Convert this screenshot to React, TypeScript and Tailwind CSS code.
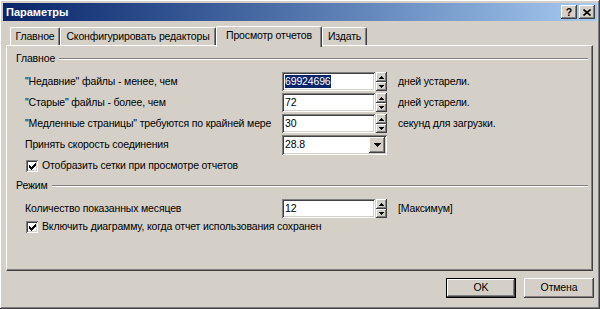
const raised =
  "shadow-[inset_-1px_-1px_#404040,inset_1px_1px_#ffffff,inset_-2px_-2px_#808080,inset_2px_2px_#d4d0c8]";
const sunken =
  "shadow-[inset_1px_1px_#808080,inset_-1px_-1px_#ffffff,inset_2px_2px_#404040,inset_-2px_-2px_#d4d0c8]";

function Arrow({ up }: { up?: boolean }) {
  return (
    <svg width="5" height="3" viewBox="0 0 5 3" shapeRendering="crispEdges">
      {up ? (
        <path d="M2 0h1v1h1v1h1v1H0V2h1V1h1z" fill="#000" />
      ) : (
        <path d="M0 0h5v1H4v1H3v1H2V2H1V1H0z" fill="#000" />
      )}
    </svg>
  );
}

function Spin() {
  return (
    <div className="flex flex-col w-[11px] h-[19px] ml-px">
      <div className={`h-[10px] bg-[#d4d0c8] flex items-center justify-center ${raised}`}>
        <Arrow up />
      </div>
      <div className={`h-[9px] bg-[#d4d0c8] flex items-center justify-center ${raised}`}>
        <Arrow />
      </div>
    </div>
  );
}

function Field({ value, selected }: { value: string; selected?: boolean }) {
  return (
    <div className={`w-[93px] h-[19px] bg-white flex items-center pl-[3px] ${sunken}`}>
      <span className={selected ? "bg-[#0a246a] text-white leading-[13px]" : "leading-[13px]"}>{value}</span>
    </div>
  );
}

function Check({ label }: { label: string }) {
  return (
    <div className="flex items-center h-[14px] pl-[19px] gap-[4px]">
      <div className={`shrink-0 w-[12px] h-[12px] bg-white flex items-center justify-center ${sunken}`}>
        <svg width="7" height="7" viewBox="0 0 7 7" shapeRendering="crispEdges">
          <path d="M6 0h1v3H6v1H5v1H4v1H3v1H2V6H1V5H0V2h1v1h1v1h1V3h1V2h1V1h1z" fill="#000" />
        </svg>
      </div>
      <span className="whitespace-nowrap">{label}</span>
    </div>
  );
}

function Group({ title }: { title: string }) {
  return (
    <div className="flex items-center h-[14px] pl-[9px] pr-[4px] gap-[4px]">
      <span>{title}</span>
      <div className="flex-1 h-[2px] border-t border-t-[#808080] border-b border-b-white" />
    </div>
  );
}

function Row({ label, children }: { label: string; children: React.ReactNode }) {
  return (
    <div className="flex items-center h-[19px] pl-[18px]">
      <span className="w-[257px] whitespace-nowrap">{label}</span>
      {children}
    </div>
  );
}

function Tab({ label, w, active }: { label: string; w: string; active?: boolean }) {
  return (
    <div
      className={`${w} ${
        active ? "h-[21px] -mb-[2px] relative z-10" : "h-[18px]"
      } bg-[#d4d0c8] border-t border-l border-r border-white border-r-[#404040] rounded-t-[2px] shadow-[inset_-1px_0_#808080] flex items-center justify-center whitespace-nowrap`}
    >
      <span className={active ? "-mt-[3px]" : ""}>{label}</span>
    </div>
  );
}

function Button({ label, def }: { label: string; def?: boolean }) {
  return (
    <div className={`w-[70px] h-[20px] ${def ? "border border-black" : ""}`}>
      <div className={`w-full h-full bg-[#d4d0c8] flex items-center justify-center ${raised}`}>{label}</div>
    </div>
  );
}

export default function App() {
  return (
    <div
      className={`w-[600px] h-[309px] bg-[#d4d0c8] p-[3px] flex flex-col text-[10.5px] tracking-[-0.15px] text-black font-['Liberation_Sans',Arial,sans-serif] ${raised}`}
    >
      <div className="h-[18px] bg-linear-to-r from-[#0a246a] to-[#a6caf0] flex items-center justify-between pl-[3px] pr-[2px]">
        <span className="text-white font-bold text-[11px] tracking-normal">Параметры</span>
        <div className="flex gap-[2px]">
          <div className={`w-[16px] h-[14px] bg-[#d4d0c8] flex items-center justify-center font-bold leading-none ${raised}`}>?</div>
          <div className={`w-[16px] h-[14px] bg-[#d4d0c8] flex items-center justify-center ${raised}`}>
            <svg width="8" height="7" viewBox="0 0 8 7">
              <path d="M0.5 0.5L7.5 6.5M7.5 0.5L0.5 6.5" stroke="#000" strokeWidth="1.6" />
            </svg>
          </div>
        </div>
      </div>

      <div className="mt-[5px] ml-[3px] w-[587px] flex flex-col">
        <div className="h-[19px] flex items-end pl-[4px]">
          <Tab label="Главное" w="w-[50px]" />
          <Tab label="Сконфигурировать редакторы" w="w-[156px]" />
          <Tab label="Просмотр отчетов" w="w-[106px]" active />
          <Tab label="Издать" w="w-[45px]" />
        </div>
        <div className="h-[226px] flex flex-col border-t border-l border-white border-r border-b border-r-[#404040] border-b-[#404040] shadow-[inset_-1px_-1px_#808080] pt-[6px]">
          <Group title="Главное" />
          <div className="mt-[6px] flex flex-col gap-[2px]">
            <Row label={'"Недавние" файлы - менее, чем'}>
              <Field value="69924696" selected />
              <Spin />
              <span className="ml-[11px]">дней устарели.</span>
            </Row>
            <Row label={'"Старые" файлы - более, чем'}>
              <Field value="72" />
              <Spin />
              <span className="ml-[11px]">дней устарели.</span>
            </Row>
            <Row label={'"Медленные страницы" требуются по крайней мере'}>
              <Field value="30" />
              <Spin />
              <span className="ml-[11px]">секунд для загрузки.</span>
            </Row>
            <div className="flex items-center h-[20px] pl-[18px]">
              <span className="w-[257px]">Принять скорость соединения</span>
              <div className={`w-[105px] h-[20px] bg-white flex items-center pl-[3px] pr-[2px] ${sunken}`}>
                <span className="flex-1">28.8</span>
                <div className={`w-[16px] h-[16px] bg-[#d4d0c8] flex items-center justify-center ${raised}`}>
                  <svg width="7" height="4" viewBox="0 0 7 4" shapeRendering="crispEdges">
                    <path d="M0 0h7v1H6v1H5v1H4v1H3V3H2V2H1V1H0z" fill="#000" />
                  </svg>
                </div>
              </div>
            </div>
            <div className="mt-[2px]">
              <Check label="Отобразить сетки при просмотре отчетов" />
            </div>
          </div>
          <div className="mt-[6px]">
            <Group title="Режим" />
          </div>
          <div className="mt-[6px] flex flex-col gap-[2px]">
            <Row label="Количество показанных месяцев">
              <Field value="12" />
              <Spin />
              <span className="ml-[11px]">[Максимум]</span>
            </Row>
            <Check label="Включить диаграмму, когда отчет использования сохранен" />
          </div>
        </div>
      </div>

      <div className="mt-[7px] flex justify-end gap-[8px] pr-[3px]">
        <Button label="OK" def />
        <Button label="Отмена" />
      </div>
    </div>
  );
}
